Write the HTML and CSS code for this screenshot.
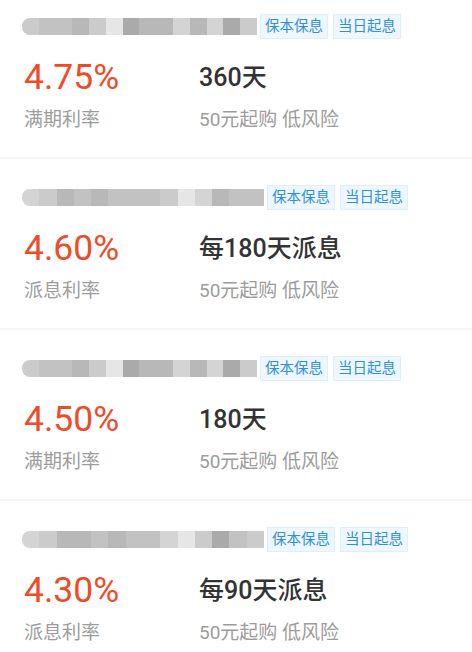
FILE: index.html
```html
<!DOCTYPE html>
<html lang="zh-CN">
<head>
    <meta charset="UTF-8">
    <meta name="viewport" content="width=device-width, initial-scale=1.0">
    <title>理财产品</title>
    <link rel="stylesheet" href="styles.css">
</head>
<body>

<div class="list">
    <div class="card">
        <div class="head">
            <div class="mosaic short">
                <span class="s2"></span><span class="s3"></span><span class="s3"></span><span class="s4"></span>
                <span class="s2"></span><span class="s6"></span><span class="s5"></span><span class="s4"></span>
                <span class="s4"></span><span class="s1"></span><span class="s4"></span><span class="s1"></span>
                <span class="s5"></span><span class="s2"></span>
            </div>
            <span class="tag">保本保息</span>
            <span class="tag">当日起息</span>
        </div>
        <div class="main">
            <div class="rate">4.75%</div>
            <div class="term">360天</div>
        </div>
        <div class="sub">
            <div class="label">满期利率</div>
            <div class="note">50元起购 低风险</div>
        </div>
    </div>

    <div class="card">
        <div class="head">
            <div class="mosaic long">
                <span class="s1"></span><span class="s2"></span><span class="s4"></span><span class="s3"></span>
                <span class="s4"></span><span class="s3"></span><span class="s3"></span><span class="s3"></span>
                <span class="s2"></span><span class="s6"></span><span class="s1"></span><span class="s4"></span>
                <span class="s3"></span><span class="s3"></span>
            </div>
            <span class="tag">保本保息</span>
            <span class="tag">当日起息</span>
        </div>
        <div class="main">
            <div class="rate">4.60%</div>
            <div class="term">每180天派息</div>
        </div>
        <div class="sub">
            <div class="label">派息利率</div>
            <div class="note">50元起购 低风险</div>
        </div>
    </div>

    <div class="card">
        <div class="head">
            <div class="mosaic short">
                <span class="s2"></span><span class="s3"></span><span class="s3"></span><span class="s4"></span>
                <span class="s2"></span><span class="s6"></span><span class="s5"></span><span class="s4"></span>
                <span class="s4"></span><span class="s1"></span><span class="s4"></span><span class="s1"></span>
                <span class="s5"></span><span class="s2"></span>
            </div>
            <span class="tag">保本保息</span>
            <span class="tag">当日起息</span>
        </div>
        <div class="main">
            <div class="rate">4.50%</div>
            <div class="term">180天</div>
        </div>
        <div class="sub">
            <div class="label">满期利率</div>
            <div class="note">50元起购 低风险</div>
        </div>
    </div>

    <div class="card">
        <div class="head">
            <div class="mosaic long">
                <span class="s1"></span><span class="s2"></span><span class="s4"></span><span class="s4"></span>
                <span class="s3"></span><span class="s4"></span><span class="s3"></span><span class="s3"></span>
                <span class="s1"></span><span class="s6"></span><span class="s2"></span><span class="s5"></span>
                <span class="s3"></span><span class="s2"></span>
            </div>
            <span class="tag">保本保息</span>
            <span class="tag">当日起息</span>
        </div>
        <div class="main">
            <div class="rate">4.30%</div>
            <div class="term">每90天派息</div>
        </div>
        <div class="sub">
            <div class="label">派息利率</div>
            <div class="note">50元起购 低风险</div>
        </div>
    </div>
</div>

</body>
</html>
```
FILE: styles.css
```css
body {
    margin: 0;
    background: #fff;
    font-family: Roboto, "Noto Sans CJK SC", sans-serif;
}
.list {
    margin-top: -12px;
}
.card {
    padding: 26px 0 25px 24px;
    border-bottom: 2px solid #f4f4f4;
}
.head {
    display: flex;
    align-items: center;
    height: 24px;
}
.mosaic {
    display: flex;
    height: 17px;
    margin-left: -2px;
    margin-right: 1px;
    border-radius: 8px 0 0 8px;
    overflow: hidden;
    filter: blur(0.6px);
}
.mosaic.short {
    width: 235px;
}
.mosaic.long {
    width: 242px;
}
.mosaic span {
    flex: 1;
}
.s1 { background: #d4d4d4; }
.s2 { background: #cbcbcb; }
.s3 { background: #c2c2c2; }
.s4 { background: #b8b8b8; }
.s5 { background: #aaaaaa; }
.s6 { background: #e6e6e6; }
.tag {
    margin-left: 2px;
    margin-right: 4px;
    padding: 0 4px;
    height: 23px;
    line-height: 23px;
    font-size: 14.5px;
    color: #2f8fdc;
    background: #eef7fe;
    border: 1px solid #deeffc;
}
.tag + .tag {
    margin-left: 1px;
}
.main {
    display: flex;
    align-items: center;
    margin-top: 19px;
    height: 40px;
}
.rate {
    width: 175px;
    font-size: 35.5px;
    line-height: 40px;
    color: #f04b28;
}
.term {
    margin-bottom: 4px;
    font-size: 25px;
    font-weight: 500;
    color: #333;
}
.sub {
    display: flex;
    margin-top: 11px;
    font-size: 19px;
    line-height: 24px;
    color: #9c9c9c;
}
.label {
    width: 175px;
}
```
